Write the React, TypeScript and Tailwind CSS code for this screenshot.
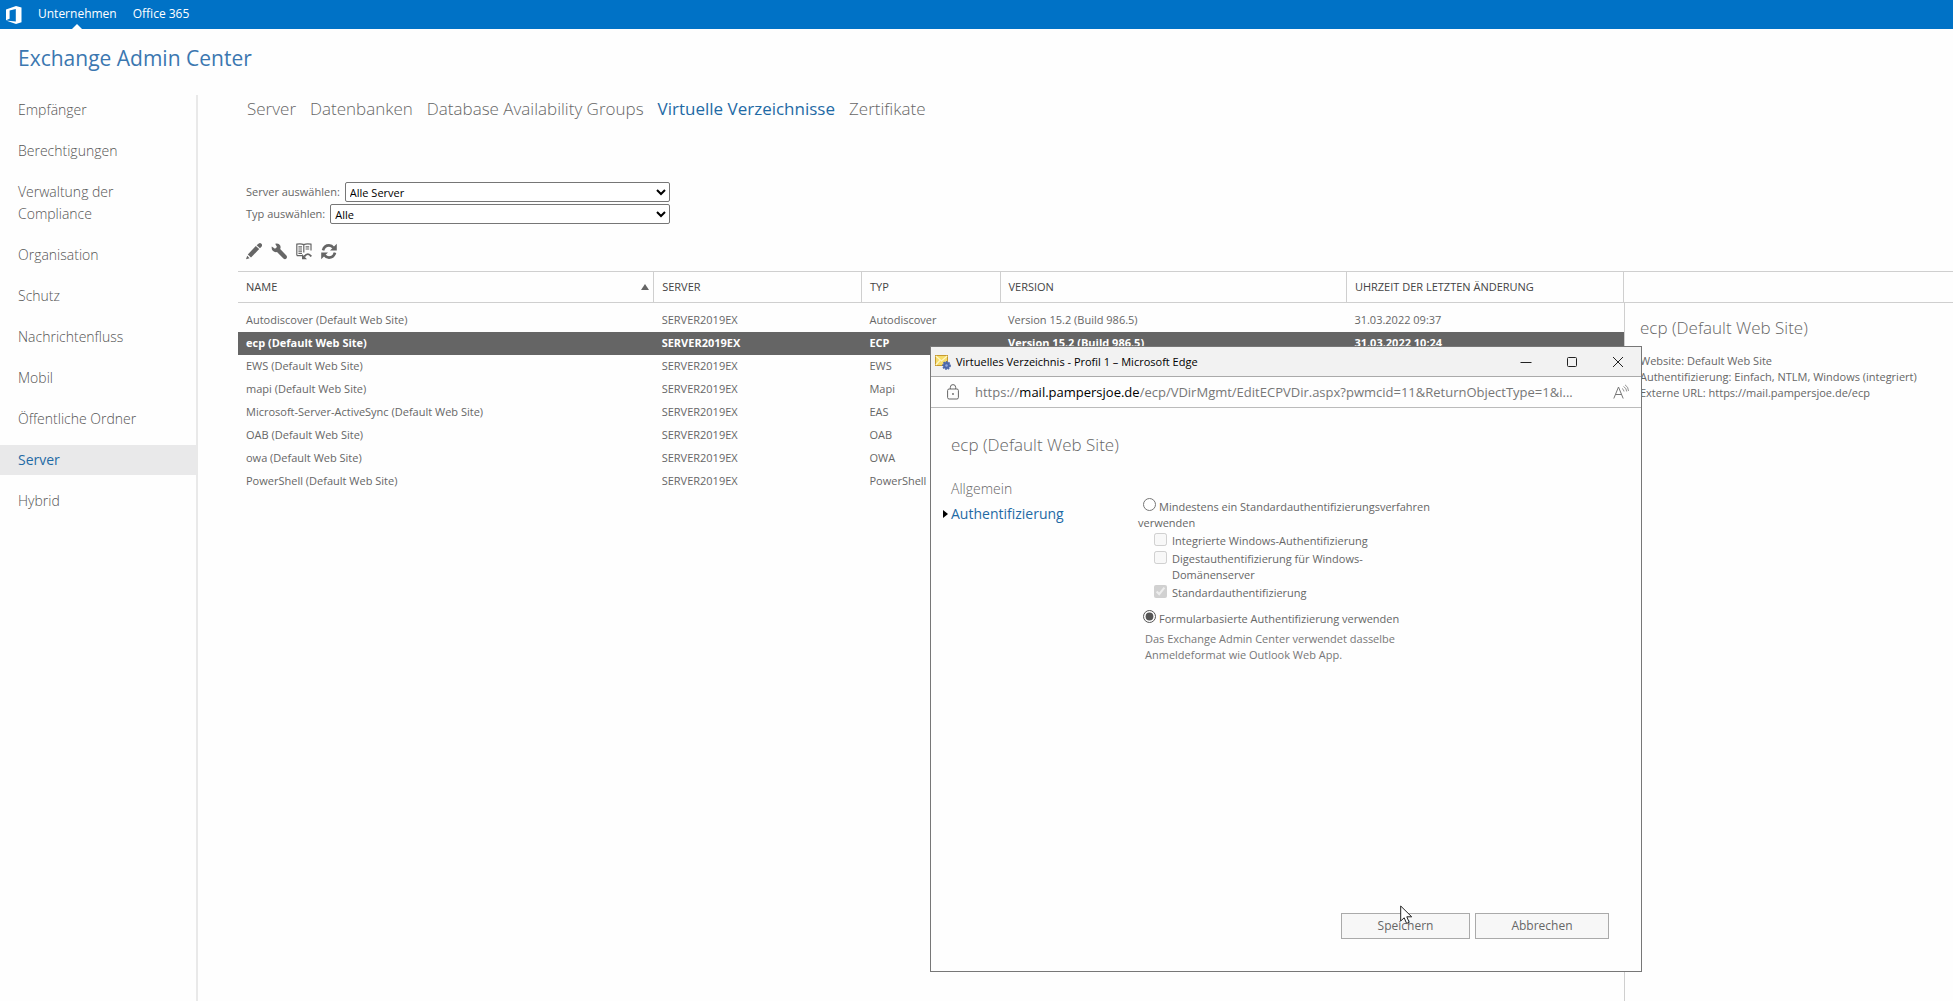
import { useState } from 'react';
import type { ReactNode } from 'react';

const NAV = [
  'Empfänger',
  'Berechtigungen',
  'Verwaltung der Compliance',
  'Organisation',
  'Schutz',
  'Nachrichtenfluss',
  'Mobil',
  'Öffentliche Ordner',
  'Server',
  'Hybrid',
];

const TABS = ['Server', 'Datenbanken', 'Database Availability Groups', 'Virtuelle Verzeichnisse', 'Zertifikate'];

const VERSION = 'Version 15.2 (Build 986.5)';

const ROWS = [
  ['Autodiscover', 'Autodiscover', '31.03.2022 09:37'],
  ['ecp', 'ECP', '31.03.2022 10:24'],
  ['EWS', 'EWS', '31.03.2022 09:37'],
  ['mapi', 'Mapi', '31.03.2022 09:37'],
  ['Microsoft-Server-ActiveSync', 'EAS', '31.03.2022 09:37'],
  ['OAB', 'OAB', '31.03.2022 09:37'],
  ['owa', 'OWA', '31.03.2022 09:37'],
  ['PowerShell', 'PowerShell', '31.03.2022 09:37'],
];

function App() {
  return (
    <div className="relative flex min-h-screen flex-col bg-[#fefefe] font-['Open_Sans','Noto_Sans',sans-serif] text-[11px] leading-4 text-[#666]">
      <TopBar />
      <h1 className="h-[66px] px-[18px] pt-[15px] text-[21px] leading-7 text-[#3b77b0]">Exchange Admin Center</h1>
      <div className="flex flex-1">
        <SideNav />
        <main className="ml-10 flex min-w-0 flex-1 flex-col">
          <Tabs />
          <Filters />
          <Toolbar />
          <div className="flex flex-1">
            <DirectoryTable />
            <Details />
          </div>
        </main>
      </div>
      <Dialog />
      <Cursor />
    </div>
  );
}

export default App;

function TopBar() {
  return (
    <header className="flex h-[29px] items-center bg-[#0072c6] pl-1.5 text-[12px] text-white">
      <svg viewBox="0 0 16 18" className="h-[18px] w-4">
        <path
          fillRule="evenodd"
          fill="currentColor"
          d="M0 3.6 10 0l5.5 1.6v14.6L10 18 0 14.4l9.8 1.2V3L3.6 4.4v8.4L0 14.3z"
        />
      </svg>
      <nav className="ml-4 flex gap-4">
        <a href="#org" className="relative flex h-[29px] items-center pb-0.5">
          Unternehmen
          <svg viewBox="0 0 10 5" className="absolute bottom-0 left-1/2 h-[5px] w-2.5 -translate-x-1/2 fill-white">
            <path d="M0 5 5 0l5 5z" />
          </svg>
        </a>
        <a href="#o365" className="flex h-[29px] items-center pb-0.5">
          Office 365
        </a>
      </nav>
    </header>
  );
}

function SideNav() {
  return (
    <nav className="flex w-[198px] flex-col gap-[11px] border-r-2 border-[#e9e9e9] text-[14px] leading-[22px] font-light text-[#555]">
      {NAV.map((item) => (
        <a
          key={item}
          href={'#' + item}
          className={
            item === 'Server' ? 'bg-[#e9e9ea] py-1 pr-16 pl-[18px] font-normal text-[#1f6aa5]' : 'py-1 pr-12 pl-[18px]'
          }
        >
          {item}
        </a>
      ))}
    </nav>
  );
}

function Tabs() {
  return (
    <nav className="flex gap-3.5 pl-[9px] text-[17px] leading-7 font-light text-[#666]">
      {TABS.map((tab) => (
        <a key={tab} href={'#' + tab} className={tab.startsWith('Virt') ? 'font-normal text-[#1f6aa5]' : ''}>
          {tab}
        </a>
      ))}
    </nav>
  );
}

function Filters() {
  return (
    <div className="mt-[59px] ml-2 flex w-[424px] flex-col gap-0.5">
      <Filter id="server" label="Server auswählen:" value="Alle Server" />
      <Filter id="type" label="Typ auswählen:" value="Alle" />
    </div>
  );
}

function Filter({ id, label, value }: { id: string; label: string; value: string }) {
  return (
    <div className="flex items-center gap-[5px]">
      <label htmlFor={id}>{label}</label>
      <select id={id} className="h-5 min-w-0 flex-1 rounded-[2px] border border-[#767676] bg-white text-black">
        <option>{value}</option>
      </select>
    </div>
  );
}

function Toolbar() {
  return (
    <div className="mt-[19px] ml-2 flex h-7 gap-[9px] text-[#666]">
      <Tool label="Bearbeiten">
        <path
          fill="currentColor"
          d="M0 16.200 1.200 12.800l2.400 2.400zM1.800 11.600 9.800 3l3.400 3-8.200 8.600zM10.600 2.200 12.800.4q1.400-.8 2.600.3t.3 2.800L14 5.200z"
        />
      </Tool>
      <Tool label="Virtuelle Verzeichnisse konfigurieren">
        <path
          fill="currentColor"
          d="M.8 3.400 4 5.800 6 4 4.200.8q3.600-1 5 1.800.8 1.800 0 3.400l6.200 6.400q1.200 1.600 0 3t-3 .2L6 9Q3.600 9.600 1.800 7.800.2 6 .8 3.400z"
        />
      </Tool>
      <Tool label="Zurücksetzen">
        <path
          fill="none"
          stroke="currentColor"
          strokeWidth="1.200"
          d="M7.800 1.400v8.200M.8 12.600V1.200q4-1 7 .4 3-1.400 7.200-.4v6.400M.8 12.600h6M2.400 3.800h3.600M2.400 6h3.600M2.400 8.200h3.600M2.400 10.400h3.600M9.600 3.800h3.600M9.600 6h3.600"
        />
        <path fill="none" stroke="currentColor" strokeWidth="1.800" d="M8.200 13.600q3.800-5 7-.2" />
        <path fill="currentColor" d="M6 11v5.200h5z" />
      </Tool>
      <Tool label="Aktualisieren">
        <path
          fill="none"
          stroke="currentColor"
          strokeWidth="2.600"
          d="M2 7.400Q3.400 2.400 8 2.400q2.800 0 4.400 2.400M14 9.600q-1.400 5-6 5-2.800 0-4.400-2.400"
        />
        <path fill="currentColor" d="M15.800.8v6.800H9zM.2 16.200V9.400H7z" />
      </Tool>
    </div>
  );
}

function Tool({ label, children }: { label: string; children: ReactNode }) {
  return (
    <button type="button" aria-label={label} className="h-[17px] w-4">
      <svg viewBox="0 0 16 17" className="h-[17px] w-4">
        {children}
      </svg>
    </button>
  );
}

function DirectoryTable() {
  const [selected, setSelected] = useState('ecp');

  return (
    <div className="min-w-0 flex-1">
      <table className="w-full table-fixed text-left">
        <thead>
          <tr className="h-[31px] border-y border-[#cfcfcf] text-[#444]">
            <Th className="w-[30%]">
              <span className="-mr-1 flex items-center justify-between">
                NAME
                <svg viewBox="0 0 8 6" className="h-1.5 w-2 fill-[#666]">
                  <path d="M0 6 4 0l4 6z" />
                </svg>
              </span>
            </Th>
            <Th className="w-[15%]">SERVER</Th>
            <Th className="w-[10%]">TYP</Th>
            <Th className="w-[25%]">VERSION</Th>
            <Th className="w-[20%]">UHRZEIT DER LETZTEN ÄNDERUNG</Th>
          </tr>
        </thead>
        <tbody>
          <tr className="h-1.5" />
          {ROWS.map(([name, type, date]) => (
            <tr
              key={name}
              onClick={() => setSelected(name)}
              className={name === selected ? 'h-[23px] bg-[#656565] font-bold text-white' : 'h-[23px]'}
            >
              <td className="truncate px-2">{name} (Default Web Site)</td>
              <td className="px-2">SERVER2019EX</td>
              <td className="px-2">{type}</td>
              <td className="px-2">{VERSION}</td>
              <td className="px-2">{date}</td>
            </tr>
          ))}
        </tbody>
      </table>
    </div>
  );
}

function Th({ className, children }: { className: string; children: ReactNode }) {
  return <th className={className + ' border-r border-[#cfcfcf] px-2 font-normal whitespace-nowrap'}>{children}</th>;
}

function Details() {
  return (
    <aside className="flex w-[329px] flex-col">
      <div className="h-8 border-y border-[#cfcfcf]" />
      <div className="flex-1 border-l border-[#cfcfcf] pt-[11px] pl-[15px]">
        <h2 className="mb-[11px] text-[17px] leading-7 font-light">ecp (Default Web Site)</h2>
        <p>Website: Default Web Site</p>
        <p>Authentifizierung: Einfach, NTLM, Windows (integriert)</p>
        <p>Externe URL: https://mail.pampersjoe.de/ecp</p>
      </div>
    </aside>
  );
}

function Dialog() {
  return (
    <section className="absolute top-[346px] left-[930px] flex h-[626px] w-[712px] flex-col border border-[#777] bg-[#fefefe]">
      <div className="flex h-[30px] items-center border-b border-[#aaa] bg-[#f2f2f2] pl-1 text-black">
        <MailGear />
        <span className="ml-[5px] flex-1">Virtuelles Verzeichnis - Profil 1 – Microsoft Edge</span>
        <div className="flex text-[#222]">
          <WindowButton label="Minimieren" d="M.5 6.500h11" />
          <WindowButton label="Maximieren" d="M2.500 1.500h7q1 0 1 1v7q0 1-1 1h-7q-1 0-1-1v-7q0-1 1-1z" />
          <WindowButton label="Schließen" d="m1 1 10 10M11 1 1 11" />
        </div>
      </div>
      <div className="flex h-[31px] items-center gap-4 border-b border-[#bbb] pr-3 pl-4 text-[13px] text-[#777]">
        <svg viewBox="0 0 12 16" className="h-4 w-3 fill-none stroke-[#666]">
          <rect x=".6" y="5" width="10.800" height="10" rx="1.500" />
          <path d="M3.300 5V3.400q0-2.800 2.700-2.800t2.700 2.800V5" />
          <circle cx="6" cy="10" r=".9" className="fill-[#666] stroke-none" />
        </svg>
        <span className="flex-1 whitespace-nowrap">
          https://<span className="text-black">mail.pampersjoe.de</span>
          /ecp/VDirMgmt/EditECPVDir.aspx?pwmcid=11&amp;ReturnObjectType=1&amp;i...
        </span>
        <button type="button" aria-label="Laut vorlesen">
          <svg viewBox="0 0 16 16" className="size-4 fill-none stroke-[#777]">
            <path d="M.8 14.500 5.500 3l4.700 11.500M2.500 10.500h6" />
            <path d="M9 4.500q1.800.8 2 3M10.500 2.500q3 1.500 3.200 5M12 .8q3.500 2 3.500 6.200" strokeWidth=".8" />
          </svg>
        </button>
      </div>
      <div className="flex flex-1 flex-col px-5 pt-[23px]">
        <h2 className="text-[17px] leading-7 font-light">ecp (Default Web Site)</h2>
        <div className="mt-[19px] flex flex-1">
          <nav className="flex w-[187px] flex-col gap-[3px] text-[14px] leading-[22px]">
            <a href="#general" className="font-light">
              Allgemein
            </a>
            <a href="#auth" className="relative text-[#1f6aa5]">
              <svg viewBox="0 0 5 8" className="absolute top-[7px] -left-2 h-2 w-[5px] fill-black">
                <path d="M0 0 5 4 0 8z" />
              </svg>
              Authentifizierung
            </a>
          </nav>
          <AuthForm />
        </div>
        <div className="mb-8 flex justify-end gap-[5px] pr-3 text-[12px]">
          <button type="button" className="h-[26px] w-[129px] border border-[#aaa] bg-[#f7f7f7]">
            Speichern
          </button>
          <button type="button" className="h-[26px] w-[134px] border border-[#aaa] bg-[#f7f7f7]">
            Abbrechen
          </button>
        </div>
      </div>
    </section>
  );
}

function AuthForm() {
  return (
    <form className="w-[304px] pt-5">
      <label className="block">
        <input type="radio" name="auth" className="mr-[3px] ml-[5px] size-[13px] accent-[#555]" />
        Mindestens ein Standardauthentifizierungsverfahren verwenden
      </label>
      <div className="mt-0.5 mb-[7px] ml-4 flex flex-col">
        <Check label="Integrierte Windows-Authentifizierung" />
        <Check label="Digestauthentifizierung für Windows-Domänenserver" />
        <Check label="Standardauthentifizierung" checked />
      </div>
      <label className="block">
        <input type="radio" name="auth" defaultChecked className="mr-[3px] ml-[5px] size-[13px] accent-[#555]" />
        Formularbasierte Authentifizierung verwenden
      </label>
      <p className="mt-1 ml-[7px] w-[270px] text-[#777]">
        Das Exchange Admin Center verwendet dasselbe Anmeldeformat wie Outlook Web App.
      </p>
    </form>
  );
}

function Check({ label, checked = false }: { label: string; checked?: boolean }) {
  return (
    <label className="flex items-start gap-[5px] pb-0.5">
      <input type="checkbox" disabled defaultChecked={checked} className="size-[13px] shrink-0" />
      <span>{label}</span>
    </label>
  );
}

function WindowButton({ label, d }: { label: string; d: string }) {
  return (
    <button type="button" aria-label={label} className="flex h-[29px] w-[46px] items-center justify-center">
      <svg viewBox="0 0 12 12" className="size-3 fill-none stroke-current">
        <path d={d} />
      </svg>
    </button>
  );
}

function MailGear() {
  return (
    <svg viewBox="0 0 16 16" className="size-4">
      <rect x=".5" y="1.500" width="12" height="10" fill="#f6dd6b" stroke="#c79a2e" />
      <path d="m.8 2 5.700 5L12.200 2M.8 11l4-4.500" fill="none" stroke="#fdf6c8" strokeWidth="1.200" />
      <circle cx="11.500" cy="11.500" r="3.400" fill="#4c68ac" stroke="#4c68ac" strokeDasharray="1.500 1" strokeWidth="2" />
      <circle cx="11.500" cy="11.500" r="1.200" fill="#93a9d8" />
    </svg>
  );
}

function Cursor() {
  return (
    <svg viewBox="0 0 13 20" className="pointer-events-none absolute top-[905px] left-[1400px] h-5 w-[13px]">
      <path d="M.7 1v15l3.500-3.200 2.400 5.600 2.600-1.100-2.400-5.500h4.900z" fill="white" stroke="#222" />
    </svg>
  );
}
